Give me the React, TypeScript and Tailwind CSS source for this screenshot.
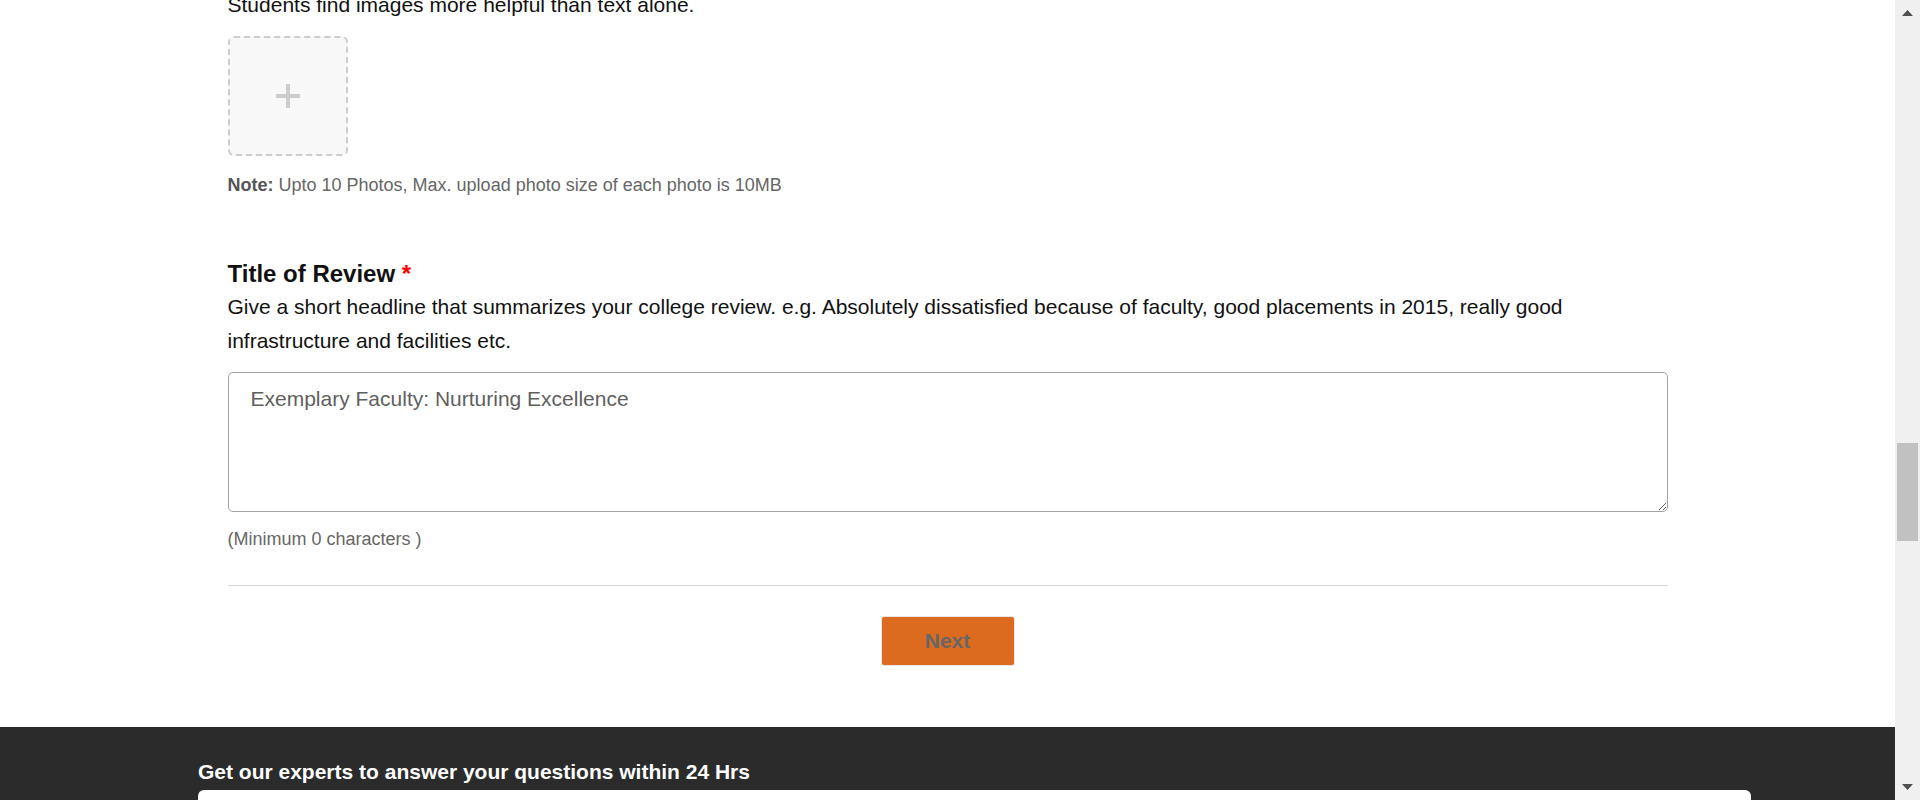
import React from "react";

export default function App() {
  return (
    <div
      className="flex h-[800px] w-full overflow-hidden bg-white text-black"
      style={{ fontFamily: '"Liberation Sans", Arial, sans-serif' }}
    >
      <div className="flex min-w-0 flex-1 flex-col">
        <div className="mx-auto flex w-[1440px] flex-col">
          <p className="mt-[-12px] text-[21px] leading-[34px] text-[#111]">
            Students find images more helpful than text alone.
          </p>
          <div className="mt-[14px] flex h-[120px] w-[120px] items-center justify-center rounded-[6px] border-2 border-dashed border-[#cccccc] bg-[#f8f8f8]">
            <svg width="24" height="24" viewBox="0 0 24 24">
              <rect x="10" y="0" width="4" height="24" fill="#cccccc" />
              <rect x="0" y="10" width="24" height="4" fill="#cccccc" />
            </svg>
          </div>
          <p className="mt-[17px] text-[18px] leading-[24px] text-[#666]">
            <span className="font-bold text-[#555]">Note:</span> Upto 10 Photos, Max. upload photo size of each photo is 10MB
          </p>

          <h3 className="mt-[62px] text-[24px] font-bold leading-[30px] text-[#111]">
            Title of Review <span className="text-[#ff0000]">*</span>
          </h3>
          <p className="mt-[1px] text-[21px] leading-[34px] text-[#111]">
            Give a short headline that summarizes your college review. e.g. Absolutely dissatisfied because of faculty, good placements in 2015, really good infrastructure and facilities etc.
          </p>
          <textarea
            readOnly
            value="Exemplary Faculty: Nurturing Excellence"
            className="mt-[14px] h-[140px] w-full rounded-[5px] border border-[#a3a3a3] px-[22px] pb-[10px] pt-[10px] text-[21px] leading-[31px] text-[#5f5f5f] outline-none"
          />
          <p className="mt-[15px] text-[18px] leading-[24px] text-[#666]">
            (Minimum 0 characters )
          </p>
          <div className="mt-[34px] h-px w-full bg-[#d6d6d6]" />
          <div className="mt-[30px] flex justify-center">
            <button className="h-[50px] w-[134px] rounded-[3px] border border-[#e8e8e8] bg-[#dc6b1f] text-[21px] font-bold text-[#666]">
              Next
            </button>
          </div>
        </div>
        <footer className="mt-[61px] flex-1 bg-[#2b2b2b] pl-[198px] pt-[33px]">
          <p className="text-[21px] font-bold leading-[24px] text-white">
            Get our experts to answer your questions within 24 Hrs
          </p>
          <div className="mt-[6px] h-[40px] w-[1553px] rounded-t-[6px] bg-white" />
        </footer>
      </div>
      <div className="flex h-[800px] w-[25px] shrink-0 flex-col bg-[#f0f0f0]">
        <div className="flex h-[25px] items-start justify-center pt-[10px]">
          <svg width="11" height="6" viewBox="0 0 11 6">
            <polygon points="5.5,0 11,6 0,6" fill="#505050" />
          </svg>
        </div>
        <div className="flex flex-1 flex-col px-[2px]">
          <div className="mt-[418px] h-[98px] w-full bg-[#c1c1c1]" />
        </div>
        <div className="flex h-[25px] items-start justify-center pt-[9px]">
          <svg width="11" height="6" viewBox="0 0 11 6">
            <polygon points="0,0 11,0 5.5,6" fill="#505050" />
          </svg>
        </div>
      </div>
    </div>
  );
}
